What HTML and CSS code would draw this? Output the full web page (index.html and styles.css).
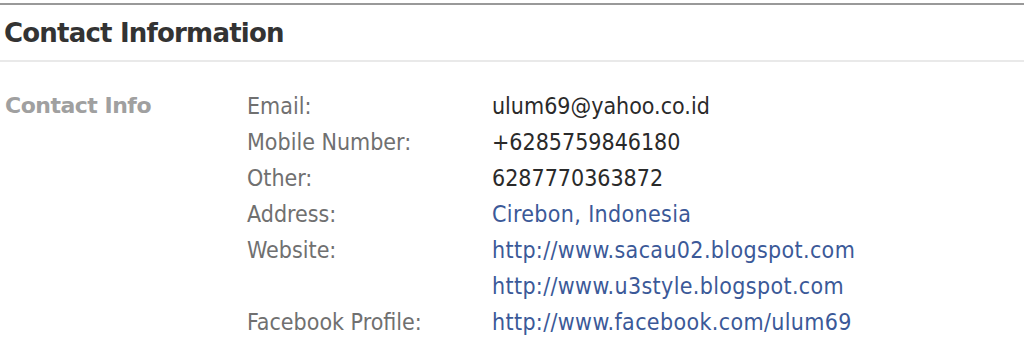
FILE: index.html
```html
<!DOCTYPE html>
<html>
<head>
<meta charset="utf-8">
<link rel="stylesheet" href="styles.css">
</head>
<body>
<div class="section">
  <div class="header"><h2 class="title">Contact Information</h2></div>
  <div class="group">
    <div class="group-label">Contact Info</div>
    <div class="rows">
      <div class="row"><div class="key">Email:</div><div class="vals"><span class="val">ulum69@yahoo.co.id</span></div></div>
      <div class="row"><div class="key">Mobile Number:</div><div class="vals"><span class="val">+6285759846180</span></div></div>
      <div class="row"><div class="key">Other:</div><div class="vals"><span class="val">6287770363872</span></div></div>
      <div class="row"><div class="key">Address:</div><div class="vals"><a class="link" href="#">Cirebon, Indonesia</a></div></div>
      <div class="row"><div class="key">Website:</div><div class="vals"><a class="link" href="#">http://www.sacau02.blogspot.com</a><a class="link" href="#">http://www.u3style.blogspot.com</a></div></div>
      <div class="row"><div class="key">Facebook Profile:</div><div class="vals"><a class="link" href="#">http://www.facebook.com/ulum69</a></div></div>
    </div>
  </div>
</div>
</body>
</html>
```
FILE: styles.css
```css
html, body { margin: 0; padding: 0; background: #fff; }
body { font-family: "DejaVu Sans Condensed", "DejaVu Sans", sans-serif; font-stretch: semi-condensed; }
.section { padding-top: 3px; }
.header {
  border-top: 2px solid #999;
  border-bottom: 2px solid #e9e9e9;
  height: 55px;
  display: flex;
  align-items: center;
  padding-left: 4px;
}
.title {
  margin: 0;
  font-family: "DejaVu Sans", sans-serif;
  font-stretch: normal;
  font-size: 26px;
  letter-spacing: -0.8px;
  font-weight: bold;
  color: #333;
}
.group {
  display: flex;
  padding-top: 26px;
}
.group-label {
  width: 242px;
  padding-left: 5px;
  font-family: "DejaVu Sans", sans-serif;
  font-stretch: normal;
  font-weight: bold;
  font-size: 22px;
  letter-spacing: -0.5px;
  line-height: 36px;
  color: #a0a0a0;
}
.rows { display: flex; flex-direction: column; }
.row { display: flex; }
.key { width: 245px; color: #707070; font-size: 23px; line-height: 36px; }
.vals { display: flex; flex-direction: column; }
.val { color: #2a2a2a; font-size: 23px; line-height: 36px; }
.link { color: #3b5998; text-decoration: none; font-size: 23px; line-height: 36px; letter-spacing: 0.35px; }
```
